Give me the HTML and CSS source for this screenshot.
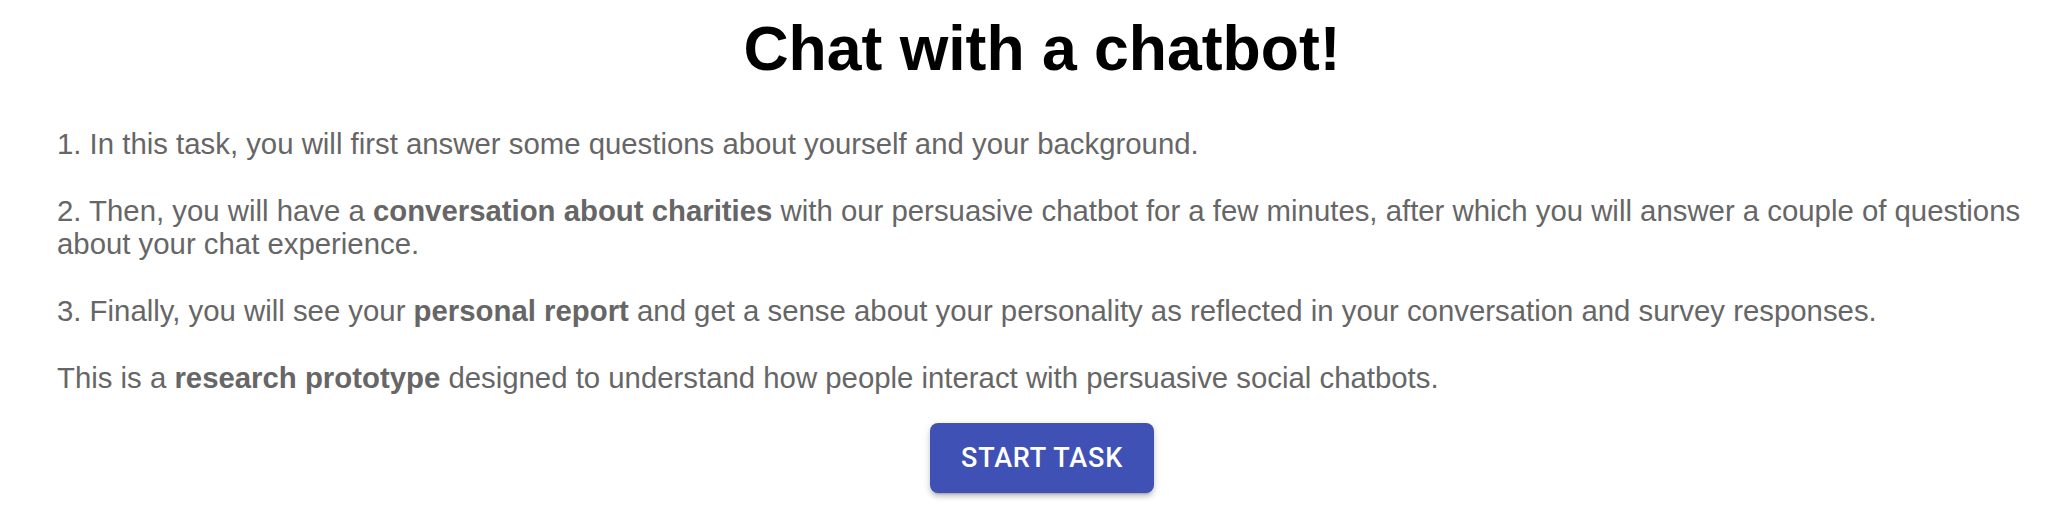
FILE: index.html
```html
<!DOCTYPE html>
<html lang="en">
<head>
  <meta charset="UTF-8">
  <meta name="viewport" content="width=device-width, initial-scale=1.0">
  <title>Chat with a chatbot!</title>
  <link rel="stylesheet" href="styles.css">
</head>
<body>
  <div class="intro">
    <h1 class="intro-title">Chat with a chatbot!</h1>

    <!-- Task steps -->
    <p class="intro-text">1. In this task, you will first answer some questions about yourself and your background.</p>
    <p class="intro-text">2. Then, you will have a <b>conversation about charities</b> with our persuasive chatbot for a few minutes, after which you will answer a couple of questions about your chat experience.</p>
    <p class="intro-text">3. Finally, you will see your <b>personal report</b> and get a sense about your personality as reflected in your conversation and survey responses.</p>
    <p class="intro-text">This is a <b>research prototype</b> designed to understand how people interact with persuasive social chatbots.</p>

    <div class="intro-actions">
      <button type="button" class="start-button">Start Task</button>
    </div>
  </div>
</body>
</html>
```

FILE: styles.css
```css
/* Global */
body {
  margin: 0;
  padding: 0;
  background-color: #fff;
  font-family: 'Liberation Sans', Arial, sans-serif;
}

.intro {
  padding: 12px 39px 30px 57px;
}

/* Heading */
.intro-title {
  font-size: 62.5px;
  font-weight: bold;
  color: #000;
  text-align: center;
  margin: 0 0 43px;
}

/* Paragraphs */
.intro-text {
  font-size: 29.35px;
  line-height: 33px;
  color: #666;
  margin: 0 0 34px;
}

.intro-text:last-of-type {
  margin-bottom: 0;
}

.intro-text b {
  font-weight: bold;
}

.intro-actions {
  display: flex;
  justify-content: center;
  margin-top: 29px;
}

/* Material style button */
.start-button {
  font-family: Roboto, 'Liberation Sans', sans-serif;
  font-size: 27px;
  font-weight: 500;
  letter-spacing: 0.8px;
  text-transform: uppercase;
  color: #fff;
  background-color: #3f51b5;
  border: none;
  border-radius: 8px;
  padding: 0 31px;
  height: 70px;
  cursor: pointer;
  box-shadow: 0 5px 2px -4px rgba(0, 0, 0, 0.2),
              0 4px 4px 0 rgba(0, 0, 0, 0.14),
              0 2px 10px 0 rgba(0, 0, 0, 0.12);
}

.start-button:hover {
  background-color: #303f9f;
}
```
